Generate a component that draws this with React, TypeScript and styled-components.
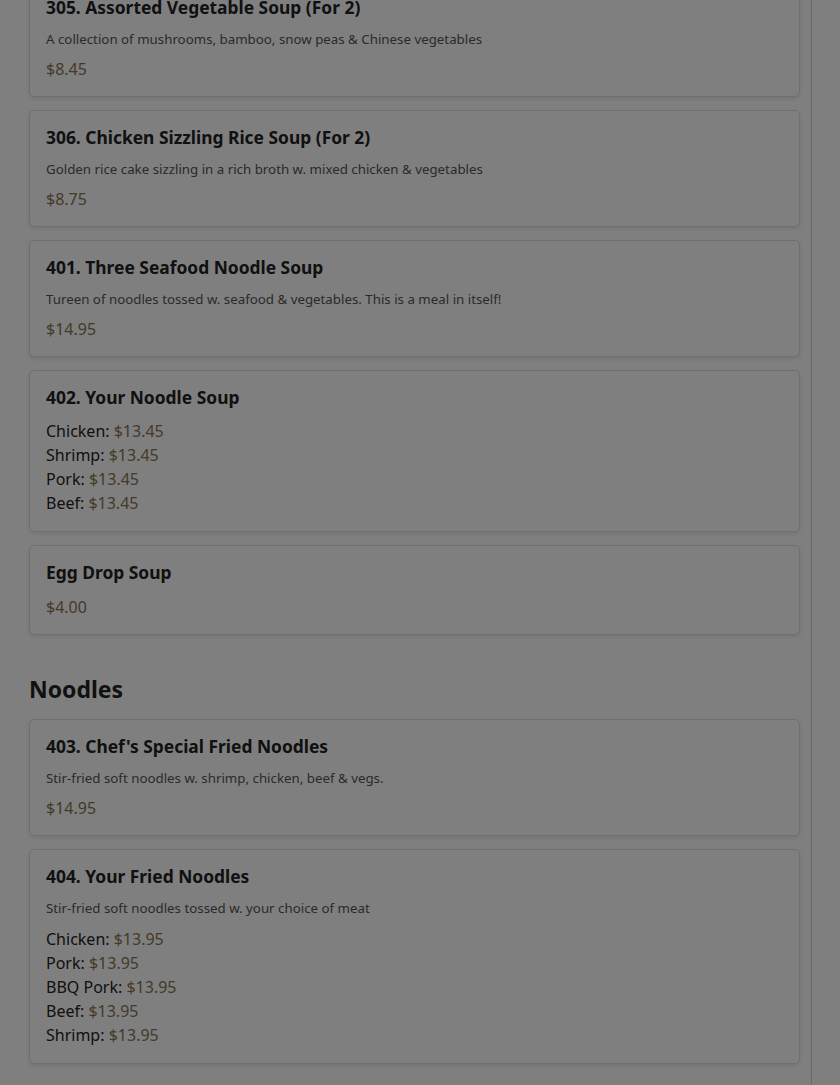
import React from "react";
import styled, { createGlobalStyle } from "styled-components";

const GlobalStyle = createGlobalStyle`
  *, *::before, *::after {
    box-sizing: border-box;
  }
  html, body {
    margin: 0;
    padding: 0;
    background: #ffffff;
    font-family: "Noto Sans", "Open Sans", sans-serif;
    color: #222222;
  }
`;

const Page = styled.div`
  display: flex;
  height: 1085px;
  overflow: hidden;
`;

const Main = styled.main`
  width: 812px;
  padding: 0 11px 0 29px;
  border-right: 1px solid #d4d4d4;
  flex-shrink: 0;
`;

const Aside = styled.aside`
  flex: 1;
`;

const Section = styled.section<{ $first?: boolean }>`
  margin-top: ${(p) => (p.$first ? "-20px" : "40px")};
`;

const SectionTitle = styled.h2`
  margin: 0 0 15px;
  font-size: 23px;
  line-height: 29px;
  font-weight: 700;
  color: #222222;
`;

const Card = styled.div`
  border: 1px solid #dedede;
  border-radius: 5px;
  background: #ffffff;
  padding: 16px;
  margin-bottom: 13px;
  box-shadow: 0 2px 4px rgba(0, 0, 0, 0.1);
`;

const Title = styled.h3`
  margin: 0 0 12px;
  font-size: 17.4px;
  line-height: 20px;
  font-weight: 700;
  color: #222222;
`;

const Desc = styled.p`
  margin: 0 0 9px;
  font-size: 13.3px;
  line-height: 20px;
  color: #555555;
`;

const Price = styled.div<{ $solo?: boolean }>`
  padding-top: ${(p) => (p.$solo ? "2px" : "0")};
  font-size: 16px;
  line-height: 22px;
  color: #8c7350;
`;

const OptionPrice = styled.span`
  color: #8c7350;
`;

const Options = styled.ul`
  list-style: none;
  margin: 0;
  padding: 0;
`;

const Option = styled.li`
  font-size: 16px;
  line-height: 24px;
  color: #222222;
`;

const Overlay = styled.div`
  position: fixed;
  inset: 0;
  background: rgba(0, 0, 0, 0.5);
`;

type Item = {
  name: string;
  desc?: string;
  price?: string;
  options?: [string, string][];
};

const soups: Item[] = [
  {
    name: "305. Assorted Vegetable Soup (For 2)",
    desc: "A collection of mushrooms, bamboo, snow peas & Chinese vegetables",
    price: "$8.45",
  },
  {
    name: "306. Chicken Sizzling Rice Soup (For 2)",
    desc: "Golden rice cake sizzling in a rich broth w. mixed chicken & vegetables",
    price: "$8.75",
  },
  {
    name: "401. Three Seafood Noodle Soup",
    desc: "Tureen of noodles tossed w. seafood & vegetables. This is a meal in itself!",
    price: "$14.95",
  },
  {
    name: "402. Your Noodle Soup",
    options: [
      ["Chicken", "$13.45"],
      ["Shrimp", "$13.45"],
      ["Pork", "$13.45"],
      ["Beef", "$13.45"],
    ],
  },
  { name: "Egg Drop Soup", price: "$4.00" },
];

const noodles: Item[] = [
  {
    name: "403. Chef's Special Fried Noodles",
    desc: "Stir-fried soft noodles w. shrimp, chicken, beef & vegs.",
    price: "$14.95",
  },
  {
    name: "404. Your Fried Noodles",
    desc: "Stir-fried soft noodles tossed w. your choice of meat",
    options: [
      ["Chicken", "$13.95"],
      ["Pork", "$13.95"],
      ["BBQ Pork", "$13.95"],
      ["Beef", "$13.95"],
      ["Shrimp", "$13.95"],
    ],
  },
];

const MenuCard = ({ item }: { item: Item }) => (
  <Card>
    <Title>{item.name}</Title>
    {item.desc && <Desc>{item.desc}</Desc>}
    {item.price && <Price $solo={!item.desc}>{item.price}</Price>}
    {item.options && (
      <Options>
        {item.options.map(([label, price]) => (
          <Option key={label}>
            {label}: <OptionPrice>{price}</OptionPrice>
          </Option>
        ))}
      </Options>
    )}
  </Card>
);

export default function App() {
  return (
    <>
      <GlobalStyle />
      <Page>
        <Main>
          <Section $first>
            {soups.map((item) => (
              <MenuCard key={item.name} item={item} />
            ))}
          </Section>
          <Section>
            <SectionTitle>Noodles</SectionTitle>
            {noodles.map((item) => (
              <MenuCard key={item.name} item={item} />
            ))}
          </Section>
        </Main>
        <Aside />
      </Page>
      <Overlay />
    </>
  );
}
